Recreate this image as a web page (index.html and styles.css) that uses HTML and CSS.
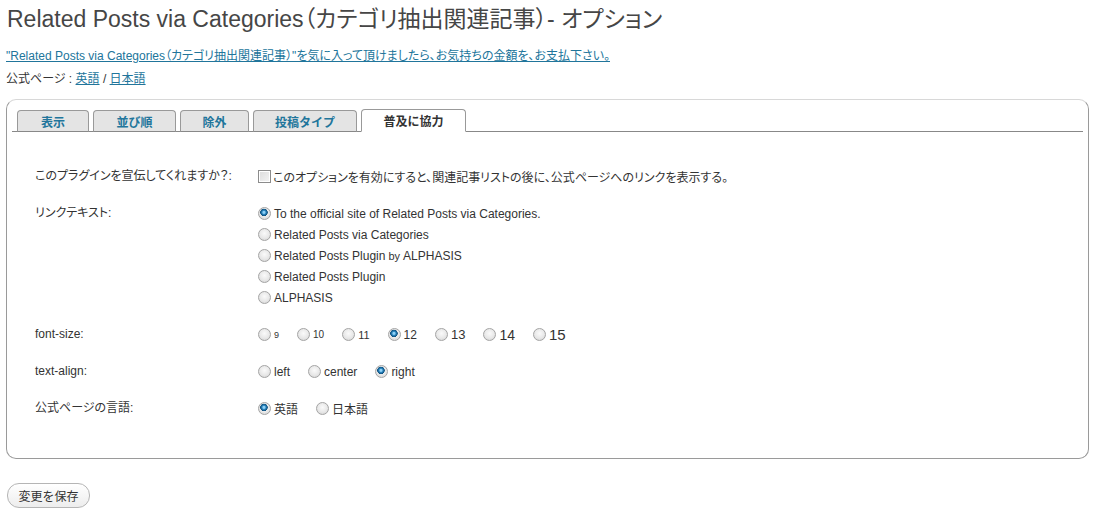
FILE: index.html
```html
<!DOCTYPE html>
<html lang="ja">
<head>
<meta charset="utf-8">
<title>Related Posts via Categories - オプション</title>
<link rel="stylesheet" href="styles.css">
</head>
<body>
<div class="wrap">
  <h2 class="title">Related Posts via Categories（カテゴリ抽出関連記事）- オプション</h2>
  <p class="donate"><a href="#">"Related Posts via Categories（カテゴリ抽出関連記事）"を気に入って頂けましたら、お気持ちの金額を、お支払下さい。</a></p>
  <p class="official">公式ページ : <a href="#">英語</a> / <a href="#">日本語</a></p>

  <div class="panel">
    <ul class="tabs">
      <li class="tab t1">表示</li>
      <li class="tab t2">並び順</li>
      <li class="tab t3">除外</li>
      <li class="tab t4">投稿タイプ</li>
      <li class="tab t5 active">普及に協力</li>
    </ul>

    <div class="form">
      <div class="row">
        <div class="label">このプラグインを宣伝してくれますか？:</div>
        <div class="ctrl">
          <label class="line"><input type="checkbox" class="check">このオプションを有効にすると、関連記事リストの後に、公式ページへのリンクを表示する。</label>
        </div>
      </div>

      <div class="row">
        <div class="label">リンクテキスト:</div>
        <div class="ctrl">
          <label class="line"><input type="radio" name="lt" class="radio" checked>To the official site of Related Posts via Categories.</label>
          <label class="line"><input type="radio" name="lt" class="radio">Related Posts via Categories</label>
          <label class="line"><input type="radio" name="lt" class="radio">Related Posts Plugin <span class="small">by</span> ALPHASIS</label>
          <label class="line"><input type="radio" name="lt" class="radio">Related Posts Plugin</label>
          <label class="line"><input type="radio" name="lt" class="radio">ALPHASIS</label>
        </div>
      </div>

      <div class="row">
        <div class="label">font-size:</div>
        <div class="ctrl inline">
          <label class="opt"><input type="radio" name="fs" class="radio"><span class="fs9">9</span></label>
          <label class="opt"><input type="radio" name="fs" class="radio"><span class="fs10">10</span></label>
          <label class="opt"><input type="radio" name="fs" class="radio"><span class="fs11">11</span></label>
          <label class="opt"><input type="radio" name="fs" class="radio" checked><span class="fs12">12</span></label>
          <label class="opt"><input type="radio" name="fs" class="radio"><span class="fs13">13</span></label>
          <label class="opt"><input type="radio" name="fs" class="radio"><span class="fs14">14</span></label>
          <label class="opt"><input type="radio" name="fs" class="radio"><span class="fs15">15</span></label>
        </div>
      </div>

      <div class="row">
        <div class="label">text-align:</div>
        <div class="ctrl inline">
          <label class="opt"><input type="radio" name="ta" class="radio">left</label>
          <label class="opt"><input type="radio" name="ta" class="radio">center</label>
          <label class="opt"><input type="radio" name="ta" class="radio" checked>right</label>
        </div>
      </div>

      <div class="row">
        <div class="label">公式ページの言語:</div>
        <div class="ctrl inline">
          <label class="opt"><input type="radio" name="lang" class="radio" checked>英語</label>
          <label class="opt"><input type="radio" name="lang" class="radio">日本語</label>
        </div>
      </div>
    </div>
  </div>

  <div class="actions">
    <button type="button" class="button">変更を保存</button>
  </div>
</div>
</body>
</html>
```

FILE: styles.css
```css
* { box-sizing: border-box; }

html, body {
  margin: 0;
  padding: 0;
  background: #fff;
}

body {
  font-family: "Liberation Sans", Arial, "Noto Sans CJK JP", sans-serif;
  font-size: 12px;
  color: #333;
  font-feature-settings: "palt";
}

.wrap {
  padding: 0 7px 0 6px;
}

.title {
  margin: 0;
  padding: 5px 0 0 1px;
  font-weight: normal;
  font-size: 23px;
  line-height: 28px;
  color: #464646;
}

.donate {
  margin: 15px 0 0 0;
  line-height: 16px;
}

.donate a,
.official a {
  color: #21759b;
  text-decoration: underline;
}

.official {
  margin: 7px 0 0 0;
  line-height: 16px;
}

.panel {
  margin-top: 12px;
  border: 1px solid #9a9a9a;
  border-top-color: #d8d8d8;
  border-radius: 10px;
  height: 360px;
  padding: 9px 5px 0 5px;
}

.tabs {
  list-style: none;
  margin: 0;
  padding: 0 0 0 5px;
  display: flex;
  align-items: flex-end;
  gap: 4px;
  border-bottom: 1px solid #888;
  height: 23px;
}

.tab {
  height: 22px;
  margin-bottom: -1px;
  padding: 0;
  border: 1px solid #999;
  border-bottom-color: #888;
  border-radius: 4px 4px 0 0;
  background: #e4e4e4;
  color: #21759b;
  font-weight: bold;
  font-size: 12px;
  line-height: 21px;
  text-align: center;
  font-family: "Noto Sans CJK JP", sans-serif;
  font-feature-settings: normal;
}

.t1 { width: 72px; }
.t2 { width: 83px; }
.t3 { width: 69px; }
.t4 { width: 104px; }
.t5 { width: 105px; }

.active {
  height: 23px;
  background: #fff;
  color: #333;
  border-color: #999;
  border-bottom-color: #fff;
  line-height: 22px;
}

.form {
  padding: 34px 0 0 23px;
  display: flex;
  flex-direction: column;
  gap: 16px;
}

.row {
  display: grid;
  grid-template-columns: 223px 1fr;
}

.label {
  line-height: 21px;
}

.ctrl {
  display: flex;
  flex-direction: column;
}

.ctrl.inline {
  flex-direction: row;
  align-items: center;
  height: 21px;
}

.line {
  display: flex;
  align-items: center;
  height: 21px;
}

.opt {
  display: flex;
  align-items: center;
  margin-right: 18px;
  height: 21px;
}

.small {
  font-size: 11px;
  margin: 0 3px;
}

.fs9 { font-size: 9px; }
.fs10 { font-size: 10px; }
.fs11 { font-size: 11px; }
.fs12 { font-size: 12px; }
.fs13 { font-size: 13px; }
.fs14 { font-size: 14px; }
.fs15 { font-size: 15px; }

.radio {
  -webkit-appearance: none;
  appearance: none;
  width: 13px;
  height: 13px;
  margin: 0 3px 0 0;
  border: 1px solid #a4a4a4;
  border-radius: 50%;
  background: radial-gradient(circle at 50% 40%, #fafafa 0%, #e8e8e8 55%, #cfcfcf 100%);
  flex: none;
}

.radio:checked {
  background:
    radial-gradient(circle at 45% 40%, #8fd0f5 0 1px, #2a86c0 2px, #0d4e7c 3.5px, transparent 4px),
    radial-gradient(circle at 50% 40%, #fafafa 0%, #e8e8e8 55%, #cfcfcf 100%);
}

.check {
  -webkit-appearance: none;
  appearance: none;
  width: 13px;
  height: 13px;
  margin: 0 2px 0 0;
  border: 1px solid #8c8c8c;
  background: linear-gradient(135deg, #dcdcdc 0%, #f4f4f4 100%);
  box-shadow: inset 0 0 0 1px #fff;
  flex: none;
}

.actions {
  margin-top: 24px;
  padding-left: 1px;
}

.button {
  height: 25px;
  width: 83px;
  padding: 0;
  border: 1px solid #b5b5b5;
  border-radius: 12px;
  background: linear-gradient(#ffffff, #ededed);
  color: #333;
  font-size: 12px;
  font-family: "Noto Sans CJK JP", sans-serif;
}
```
